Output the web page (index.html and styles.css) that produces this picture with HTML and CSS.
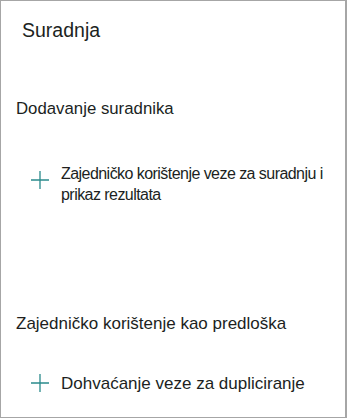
FILE: index.html
```html
<!DOCTYPE html>
<html lang="hr">
<head>
  <meta charset="UTF-8" />
  <meta name="viewport" content="width=device-width, initial-scale=1.0"/>
  <title>Suradnja</title>
  <link rel="stylesheet" href="styles.css">
</head>
<body>
  <div class="panel">
    <h1 class="title">Suradnja</h1>

    <h2 class="section section-first">Dodavanje suradnika</h2>
    <div class="action action-first">
      <svg class="plus" viewBox="0 0 18 18" width="18" height="18">
        <path d="M9 0v18M0 9h18" />
      </svg>
      <span class="action-text">Zajedničko korištenje veze za suradnju i prikaz rezultata</span>
    </div>

    <h2 class="section section-second">Zajedničko korištenje kao predloška</h2>
    <div class="action action-second">
      <svg class="plus" viewBox="0 0 18 18" width="18" height="18">
        <path d="M9 0v18M0 9h18" />
      </svg>
      <span class="action-text">Dohvaćanje veze za dupliciranje</span>
    </div>
  </div>
</body>
</html>
```

FILE: styles.css
```css
body {
  margin: 0;
  background: #fff;
  font-family: "Liberation Sans", Arial, sans-serif;
  color: #201f1e;
}

.panel {
  box-sizing: border-box;
  width: 347px;
  height: 418px;
  border: 1px solid #a6a6a6;
  border-right-width: 2px;
  padding-top: 17px;
  overflow: hidden;
}

.title {
  margin: 0 0 0 21px;
  font-size: 19.5px;
  line-height: 24px;
  font-weight: normal;
}

.section {
  margin: 0 0 0 15px;
  font-size: 17px;
  line-height: 20px;
  font-weight: normal;
}

.section-first {
  margin-top: 57px;
  font-size: 16.8px;
}

.section-second {
  margin-top: 109px;
}

.action {
  display: flex;
  align-items: flex-start;
  gap: 12px;
  padding: 0 14px 0 30px;
  font-size: 17px;
  line-height: 21px;
}

.action-first {
  margin-top: 44px;
  font-size: 16px;
  letter-spacing: -0.55px;
}

.action-first .plus {
  margin-top: 8px;
}

.action-second {
  margin-top: 39px;
}

.action-second .plus {
  margin-top: 1px;
}

.plus {
  flex: none;
  fill: none;
  stroke: #2a8a8c;
  stroke-width: 1.3;
}
```
